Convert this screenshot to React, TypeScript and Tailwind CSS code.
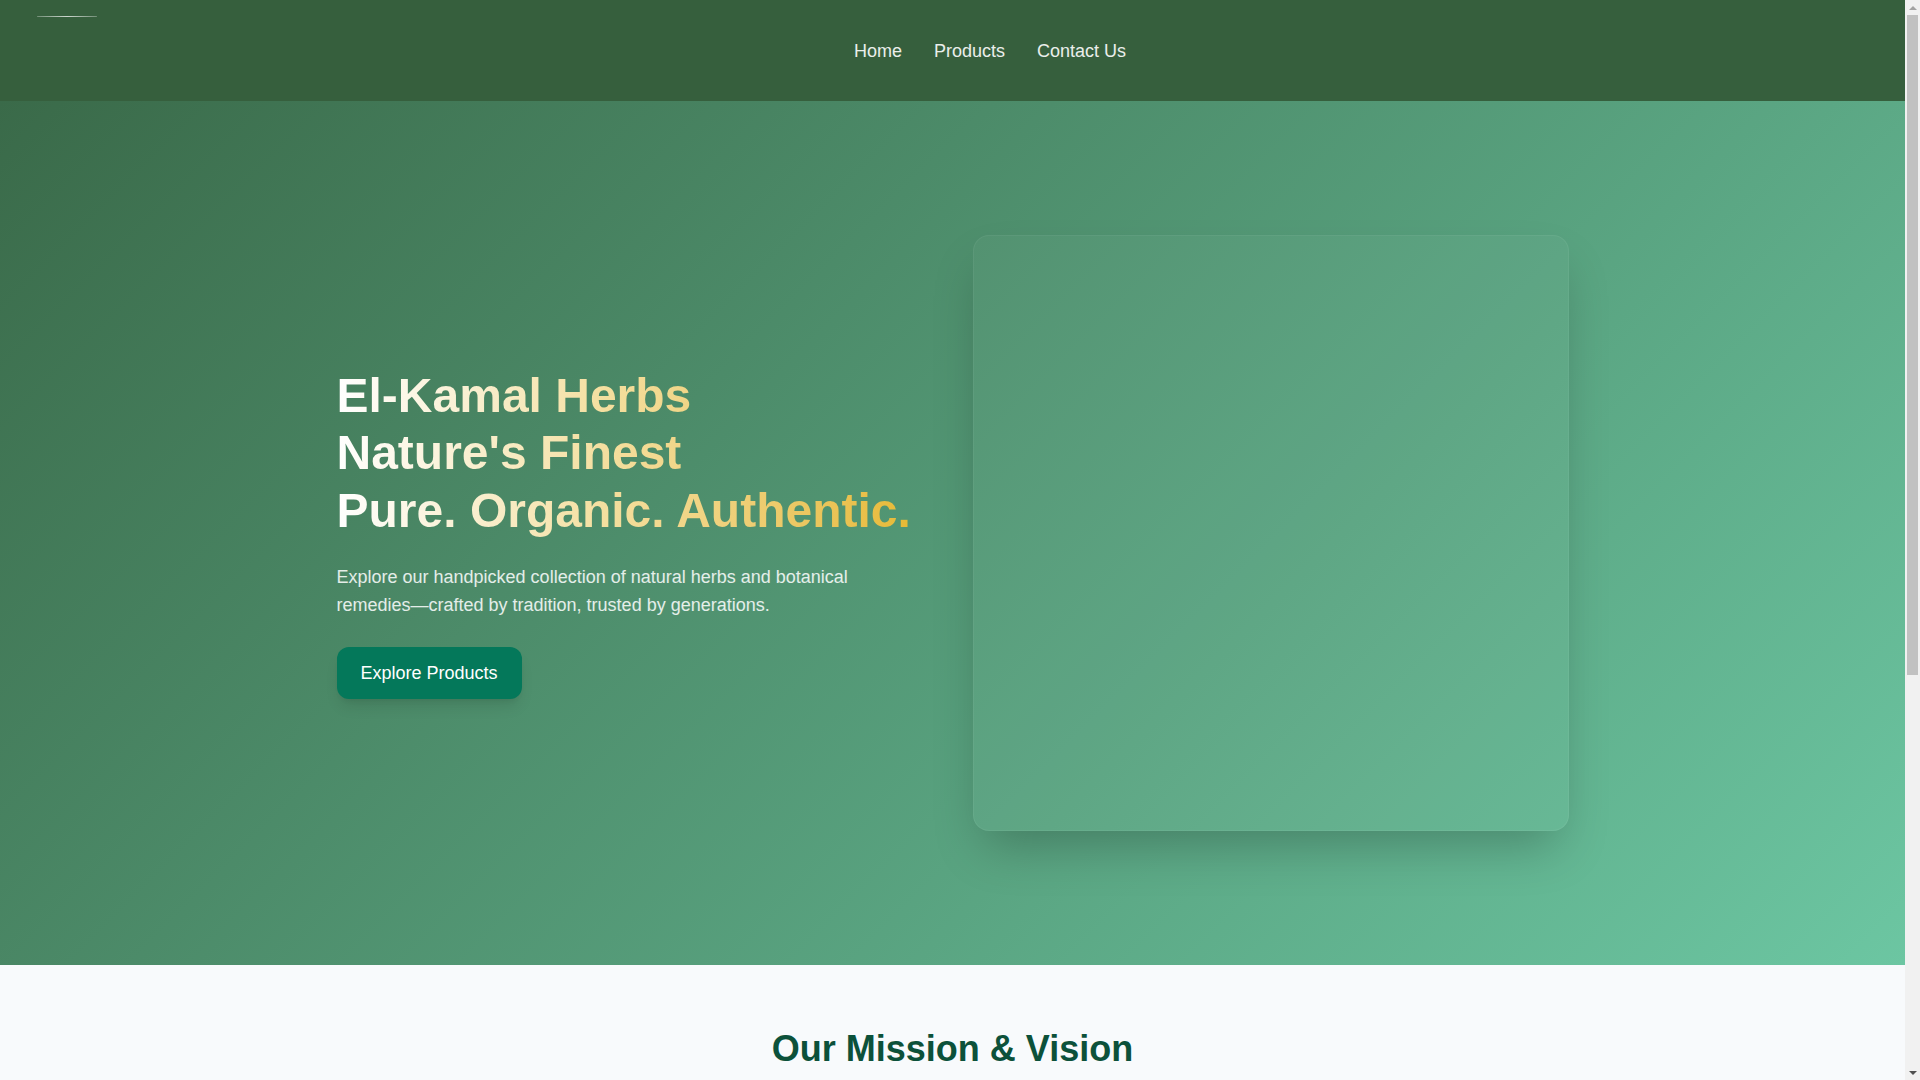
import React from 'react';

const navLinks = ['Home', 'Products', 'Contact Us'];

const missionCards = [
    {
        title: 'Our Mission',
        text: 'To bring the purest natural herbs and botanical remedies to every home, sourced responsibly and prepared with the care our traditions demand.',
    },
    {
        title: 'Our Vision',
        text: 'To be the most trusted name in herbal wellness, honouring generations of knowledge while meeting the quality standards of today.',
    },
];

const Header: React.FC = () => (
    <header className="h-[101px] bg-[#365f3d] pl-[35px] pr-6 flex items-center justify-between">
        {/* logo placeholder */}
        <a href="#" className="self-start mt-4 w-16 flex justify-center">
            <span className="block h-px w-[60px] rounded-full bg-gradient-to-r from-white/30 via-white/75 to-white/30" />
        </a>
        <nav className="flex items-center gap-8 text-lg text-white/90">
            {navLinks.map((link) => (
                <a key={link} href="#" className="hover:text-white transition-colors">
                    {link}
                </a>
            ))}
        </nav>
        <div />
    </header>
);

const Hero: React.FC = () => (
    <section className="min-h-[80vh] flex items-center bg-[linear-gradient(135deg,#3a6a49,#6cc6a2)]">
        <div className="max-w-7xl mx-auto w-full px-6 grid grid-cols-2 gap-10 items-center">
            <div>
                <h1 className="text-5xl font-bold leading-[1.2] bg-gradient-to-r from-white via-[#f4df9f] via-45% to-[#e6b726] bg-clip-text text-transparent">
                    El-Kamal Herbs
                    <br />
                    Nature's Finest
                    <br />
                    Pure. Organic. Authentic.
                </h1>
                <p className="mt-6 max-w-xl text-lg text-white/85">
                    Explore our handpicked collection of natural herbs and botanical remedies—crafted by tradition, trusted by generations.
                </p>
                <button
                    type="button"
                    className="mt-7 px-6 py-3 text-lg text-white bg-[#04785a] rounded-xl shadow-lg hover:bg-emerald-800 transition-colors"
                >
                    Explore Products
                </button>
            </div>
            <div className="aspect-square rounded-2xl bg-white/[0.03] border border-white/5 shadow-2xl" />
        </div>
    </section>
);

const Mission: React.FC = () => (
    <section className="bg-slate-50 pt-16 pb-32">
        <div className="max-w-7xl mx-auto px-6">
            <h2 className="text-4xl font-bold text-center text-[#0c513a]">Our Mission &amp; Vision</h2>
            <p className="mt-4 text-lg text-center text-gray-600 max-w-2xl mx-auto">
                Rooted in nature, guided by tradition and committed to quality in every leaf we deliver.
            </p>
            <div className="mt-12 grid grid-cols-2 gap-10">
                {missionCards.map((card) => (
                    <div key={card.title} className="bg-white rounded-2xl shadow-md border border-gray-100 p-10 min-h-[360px]">
                        <div className="w-12 h-12 rounded-full bg-emerald-100 flex items-center justify-center">
                            <svg viewBox="0 0 24 24" className="w-6 h-6 text-emerald-700" fill="none" stroke="currentColor" strokeWidth={2} strokeLinecap="round" strokeLinejoin="round">
                                <path d="M11 20A7 7 0 0 1 9.8 6.1C15.5 5 17 4.48 19 2c1 2 2 4.18 2 8 0 5.5-4.78 10-10 10Z" />
                                <path d="M2 21c0-3 1.85-5.36 5.08-6C9.5 14.52 12 13 13 12" />
                            </svg>
                        </div>
                        <h3 className="mt-6 text-2xl font-bold text-[#0c513a]">{card.title}</h3>
                        <p className="mt-4 text-lg text-gray-600 leading-8">{card.text}</p>
                    </div>
                ))}
            </div>
        </div>
    </section>
);

const Footer: React.FC = () => (
    <footer className="bg-[#365f3d] py-6 text-center text-sm text-white/80">
        © 2024 El-Kamal Herbs. All rights reserved.
    </footer>
);

// classic browser scrollbar strip
const ScrollTrack: React.FC = () => (
    <div className="w-[15px] shrink-0 bg-[#f1f1f1] flex flex-col items-center">
        <div className="h-[15px] flex items-center justify-center">
            <span className="block w-0 h-0 border-x-[4px] border-x-transparent border-b-[4px] border-b-[#a3a3a3]" />
        </div>
        <div className="w-[11px] h-[660px] bg-[#c1c1c1]" />
        <div className="flex-1" />
        <div className="h-[15px] flex items-center justify-center">
            <span className="block w-0 h-0 border-x-[4px] border-x-transparent border-t-[4px] border-t-[#505050]" />
        </div>
    </div>
);

export default function App() {
    return (
        <div className="h-screen flex bg-slate-50 font-['Liberation_Sans',Arial,sans-serif]">
            <div className="flex-1 min-w-0 overflow-y-auto">
                <Header />
                <Hero />
                <Mission />
                <Footer />
            </div>
            <ScrollTrack />
        </div>
    );
}
